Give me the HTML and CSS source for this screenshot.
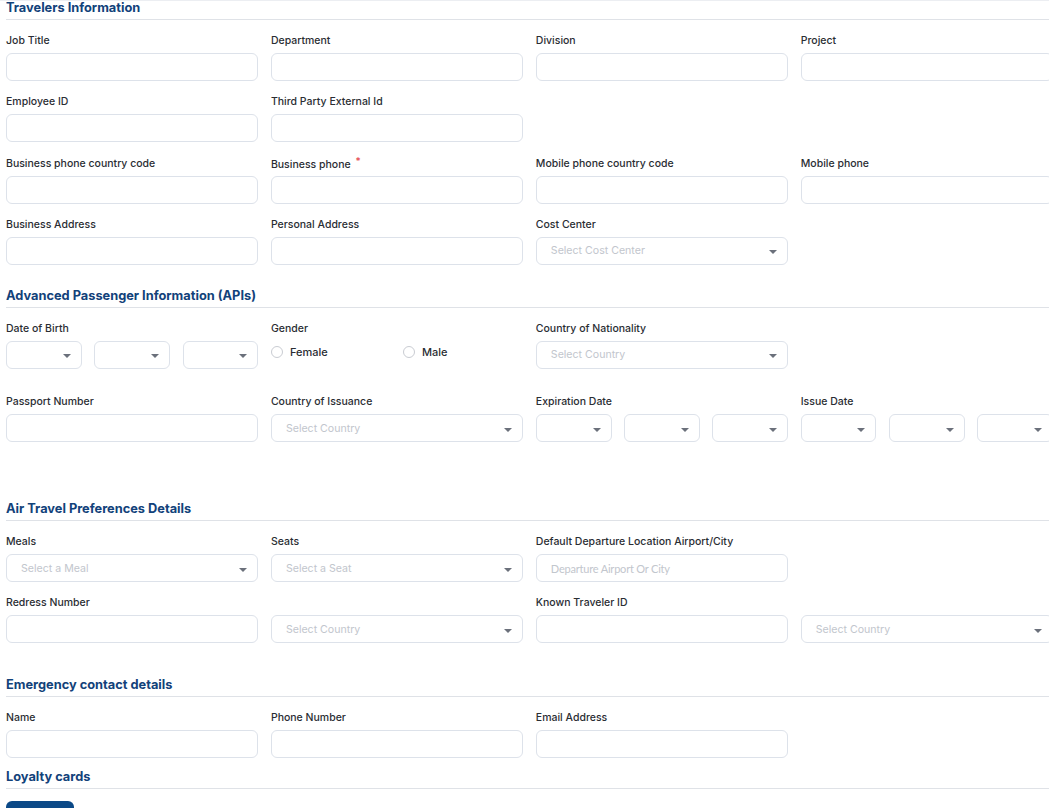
FILE: index.html
```html
<!DOCTYPE html>
<html>
<head>
<meta charset="utf-8">
<link rel="stylesheet" href="styles.css">
</head>
<body>
<div class="page">
  <section class="sec sec-first">
    <h2 class="sec-title">Travelers Information</h2>
    <div class="grid">
      <div class="field"><label>Job Title</label><div class="input"></div></div>
      <div class="field"><label>Department</label><div class="input"></div></div>
      <div class="field"><label>Division</label><div class="input"></div></div>
      <div class="field"><label>Project</label><div class="input"></div></div>

      <div class="field"><label>Employee ID</label><div class="input"></div></div>
      <div class="field"><label>Third Party External Id</label><div class="input"></div></div>
      <div class="field empty"></div>
      <div class="field empty"></div>

      <div class="field"><label>Business phone country code</label><div class="input"></div></div>
      <div class="field"><label>Business phone <span class="req">*</span></label><div class="input"></div></div>
      <div class="field"><label>Mobile phone country code</label><div class="input"></div></div>
      <div class="field"><label>Mobile phone</label><div class="input"></div></div>

      <div class="field"><label>Business Address</label><div class="input"></div></div>
      <div class="field"><label>Personal Address</label><div class="input"></div></div>
      <div class="field"><label>Cost Center</label><div class="input select"><span class="ph">Select Cost Center</span><i class="caret"></i></div></div>
    </div>
  </section>

  <section class="sec sec-api">
    <h2 class="sec-title">Advanced Passenger Information (APIs)</h2>
    <div class="grid">
      <div class="field tall"><label>Date of Birth</label>
        <div class="dates">
          <div class="input select"><i class="caret"></i></div>
          <div class="input select"><i class="caret"></i></div>
          <div class="input select"><i class="caret"></i></div>
        </div>
      </div>
      <div class="field tall"><label>Gender</label>
        <div class="radios">
          <span class="radio"><i class="circle"></i>Female</span>
          <span class="radio"><i class="circle"></i>Male</span>
        </div>
      </div>
      <div class="field tall"><label>Country of Nationality</label><div class="input select"><span class="ph">Select Country</span><i class="caret"></i></div></div>
      <div class="field tall empty"></div>

      <div class="field"><label>Passport Number</label><div class="input"></div></div>
      <div class="field"><label>Country of Issuance</label><div class="input select"><span class="ph">Select Country</span><i class="caret"></i></div></div>
      <div class="field"><label>Expiration Date</label>
        <div class="dates">
          <div class="input select"><i class="caret"></i></div>
          <div class="input select"><i class="caret"></i></div>
          <div class="input select"><i class="caret"></i></div>
        </div>
      </div>
      <div class="field"><label>Issue Date</label>
        <div class="dates">
          <div class="input select"><i class="caret"></i></div>
          <div class="input select"><i class="caret"></i></div>
          <div class="input select"><i class="caret"></i></div>
        </div>
      </div>
    </div>
  </section>

  <section class="sec sec-air">
    <h2 class="sec-title">Air Travel Preferences Details</h2>
    <div class="grid">
      <div class="field"><label>Meals</label><div class="input select"><span class="ph">Select a Meal</span><i class="caret"></i></div></div>
      <div class="field"><label>Seats</label><div class="input select"><span class="ph">Select a Seat</span><i class="caret"></i></div></div>
      <div class="field"><label>Default Departure Location Airport/City</label><div class="input"><span class="ph lato">Departure Airport Or City</span></div></div>
      <div class="field empty"></div>

      <div class="field"><label>Redress Number</label><div class="input"></div></div>
      <div class="field"><label>&nbsp;</label><div class="input select"><span class="ph">Select Country</span><i class="caret"></i></div></div>
      <div class="field"><label>Known Traveler ID</label><div class="input"></div></div>
      <div class="field"><label>&nbsp;</label><div class="input select"><span class="ph">Select Country</span><i class="caret"></i></div></div>
    </div>
  </section>

  <section class="sec sec-emg">
    <h2 class="sec-title">Emergency contact details</h2>
    <div class="grid">
      <div class="field"><label>Name</label><div class="input"></div></div>
      <div class="field"><label>Phone Number</label><div class="input"></div></div>
      <div class="field"><label>Email Address</label><div class="input"></div></div>
    </div>
  </section>

  <section class="sec sec-loy">
    <h2 class="sec-title">Loyalty cards</h2>
    <div class="btn"></div>
  </section>
</div>
</body>
</html>
```

FILE: styles.css
```css
html, body {
  margin: 0;
  padding: 0;
  background: #fff;
  overflow: hidden;
}
body {
  font-family: Inter, "Noto Sans", sans-serif;
  color: #2a2d33;
  border-top: 1px solid #eceef2;
}
.page {
  width: 1047px;
  margin-left: 6px;
}
.sec-title {
  margin: 0;
  height: 16px;
  line-height: 16px;
  font-size: 12.8px;
  font-weight: 700;
  color: #12427a;
  padding-bottom: 3px;
  border-bottom: 1px solid #dfe2e7;
}
.sec-first { margin-top: -1px; }
.sec-api { margin-top: 23px; }
.sec-air { margin-top: 59px; }
.sec-emg { margin-top: 34px; }
.sec-loy { margin-top: 11px; }
.grid {
  display: grid;
  grid-template-columns: repeat(4, minmax(0, 1fr));
  column-gap: 12.67px;
  row-gap: 13.3px;
  margin-top: 13px;
}
.field {
  display: flex;
  flex-direction: column;
  min-width: 0;
}
.field.tall { height: 60px; }
.field label {
  font-size: 10.5px;
  font-weight: 500;
  line-height: 14px;
  height: 14px;
  padding-top: 1px;
  margin-bottom: 5px;
  white-space: nowrap;
  color: #2a2d33;
}
.req {
  color: #e5484d;
  position: relative;
  top: -3px;
  margin-left: 2px;
  font-size: 10px;
}
.input {
  height: 28px;
  box-sizing: border-box;
  border: 1px solid #dde2ea;
  border-radius: 6px;
  background: #fff;
  display: flex;
  align-items: center;
  padding: 0 10px 0 14px;
  position: relative;
  min-width: 0;
}
.ph {
  font-size: 10.6px;
  color: #c2c6cd;
  flex: 1;
  white-space: nowrap;
}
.ph.lato {
  font-family: Lato, Inter, sans-serif;
  font-size: 11px;
  letter-spacing: -0.2px;
}
.caret {
  width: 0;
  height: 0;
  border-left: 4.5px solid transparent;
  border-right: 4.5px solid transparent;
  border-top: 4.5px solid #6b707b;
  margin-left: auto;
  margin-top: 3px;
}
.dates {
  display: grid;
  grid-template-columns: repeat(3, minmax(0, 1fr));
  column-gap: 12.5px;
}
.radios {
  display: flex;
  align-items: center;
  height: 22px;
}
.radio {
  display: flex;
  align-items: center;
  width: 132px;
  flex: none;
  font-size: 11px;
  font-weight: 500;
  color: #2a2d33;
}
.circle {
  width: 12px;
  height: 12px;
  border: 1px solid #c9ccd2;
  border-radius: 50%;
  margin-right: 7px;
  box-sizing: border-box;
}
.btn {
  margin-top: 12px;
  width: 68px;
  height: 30px;
  background: #0b4987;
  border-radius: 6px;
}
```
